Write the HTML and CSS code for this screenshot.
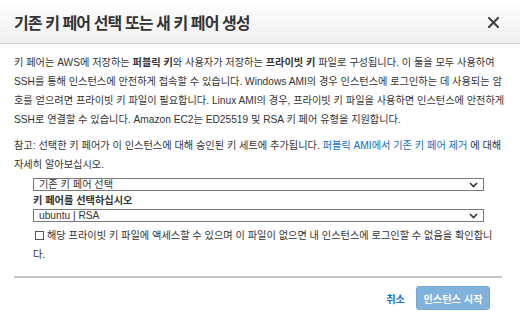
FILE: index.html
```html
<!DOCTYPE html>
<html lang="ko">
<head>
<meta charset="utf-8">
<link rel="stylesheet" href="styles.css">
</head>
<body>
<div class="modal">
  <div class="header">
    <h1 class="title">기존 키 페어 선택 또는 새 키 페어 생성</h1>
    <svg class="close" width="11" height="11" viewBox="0 0 11 11"><path d="M1 1L10 10M10 1L1 10" stroke="#444" stroke-width="2.2" stroke-linecap="square"/></svg>
  </div>
  <div class="content">
    <p class="intro"><span class="ln">키 페어는 AWS에 저장하는 <b>퍼블릭 키</b>와 사용자가 저장하는 <b>프라이빗 키</b> 파일로 구성됩니다. 이 둘을 모두 사용하여</span><span class="ln">SSH를 통해 인스턴스에 안전하게 접속할 수 있습니다. Windows AMI의 경우 인스턴스에 로그인하는 데 사용되는 암</span><span class="ln">호를 얻으려면 프라이빗 키 파일이 필요합니다. Linux AMI의 경우, 프라이빗 키 파일을 사용하면 인스턴스에 안전하게</span><span class="ln">SSH로 연결할 수 있습니다. Amazon EC2는 ED25519 및 RSA 키 페어 유형을 지원합니다.</span></p>
    <p class="note"><span class="ln">참고: 선택한 키 페어가 이 인스턴스에 대해 승인된 키 세트에 추가됩니다. <a class="link" href="#">퍼블릭 AMI에서 기존 키 페어 제거</a> 에 대해</span><span class="ln">자세히 알아보십시오.</span></p>
    <div class="form">
      <div class="select"><span>기존 키 페어 선택</span><svg class="chev" width="9" height="6" viewBox="0 0 9 6"><path d="M1 1L4.5 4.5L8 1" fill="none" stroke="#333" stroke-width="1.6"/></svg></div>
      <div class="label">키 페어를 선택하십시오</div>
      <div class="select"><span>ubuntu | RSA</span><svg class="chev" width="9" height="6" viewBox="0 0 9 6"><path d="M1 1L4.5 4.5L8 1" fill="none" stroke="#333" stroke-width="1.6"/></svg></div>
      <p class="check"><span class="ln"><span class="box"></span>해당 프라이빗 키 파일에 액세스할 수 있으며 이 파일이 없으면 내 인스턴스에 로그인할 수 없음을 확인합니</span><span class="ln">다.</span></p>
    </div>
  </div>
  <div class="footer">
    <a class="cancel" href="#">취소</a>
    <button class="launch" type="button">인스턴스 시작</button>
  </div>
</div>
</body>
</html>
```

FILE: styles.css
```css
* { box-sizing: border-box; }
html, body { margin: 0; padding: 0; background: #fff; }
body {
  font-family: "Liberation Sans", "Noto Sans CJK KR", sans-serif;
  color: #333;
  width: 520px;
  height: 321px;
  overflow: hidden;
}
.modal { width: 520px; }
.header {
  height: 44px;
  background: linear-gradient(#ffffff, #efefef);
  border-bottom: 1px solid #cfcfcf;
  display: flex;
  align-items: center;
  justify-content: space-between;
  padding: 0 21px 0 14px;
}
.title {
  margin: 0;
  font-size: 16px;
  font-weight: bold;
  color: #333;
  letter-spacing: -0.9px;
}
.close { display: block; margin-top: 1px; }
.content {
  padding: 0 14px 0 14px;
  font-size: 10.2px;
  line-height: 19px;
}
.ln { display: block; white-space: nowrap; height: 19px; }
.intro { margin: 9px 0 0; }
.note { margin: 7px 0 0; }
.link { color: #0a6ebd; text-decoration: none; }
.form { padding: 4px 22px 0 19px; }
.select {
  height: 13px;
  border: 1px solid #7a7a7a;
  display: flex;
  align-items: center;
  justify-content: space-between;
  padding: 0 5px 0 5px;
  font-size: 10.2px;
  line-height: 11px;
}
.chev { display: block; }
.label {
  font-weight: bold;
  line-height: 17px;
  margin-top: 1px;
}
.check { margin: 4px 0 0; }
.box {
  display: inline-block;
  width: 9px;
  height: 9px;
  border: 1px solid #555;
  margin: 0 3px 0 2px;
  vertical-align: -1px;
}
.footer {
  margin: 12px 18px 0 14px;
  border-top: 2px solid #c4c4c4;
  display: flex;
  justify-content: flex-end;
  align-items: center;
  padding: 8px 12px 0 0;
  gap: 11px;
}
.cancel {
  color: #1a73c6;
  font-weight: bold;
  font-size: 10.2px;
  text-decoration: none;
}
.launch {
  font-family: inherit;
  width: 74px;
  height: 24px;
  border: 1px solid #78a9d3;
  border-radius: 3px;
  background: #80b2db;
  color: #fff;
  font-weight: bold;
  font-size: 10.2px;
  padding: 0;
}
```
